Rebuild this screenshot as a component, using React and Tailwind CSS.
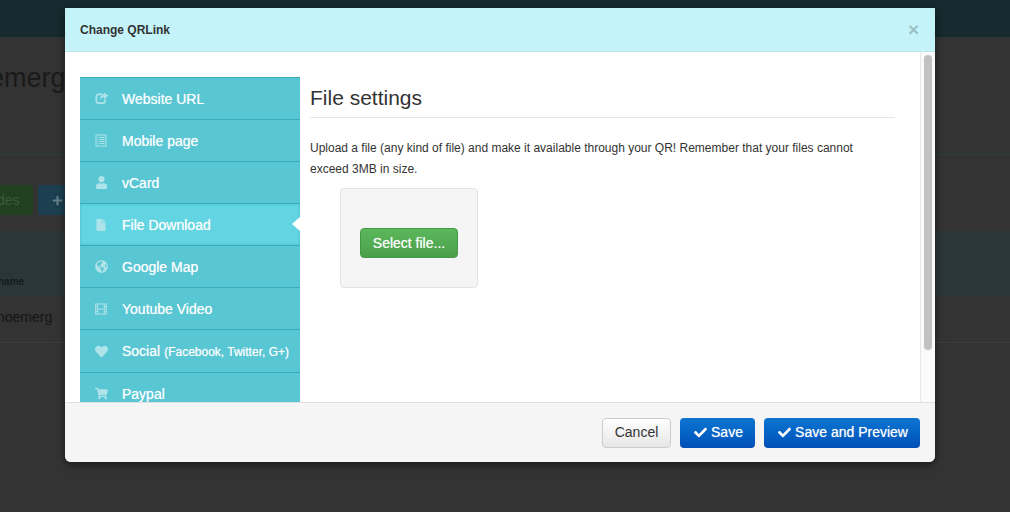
import { FaCheck, FaFile, FaGlobeAmericas, FaHeart, FaPlus, FaShoppingCart, FaUser } from "react-icons/fa";

const ShareIcon = () => (
  <svg width="14" height="13" viewBox="0 0 14 13" fill="currentColor">
    <path d="M3.500 1.500H8V3.200H3.500C2.700 3.200 2.200 3.700 2.200 4.500V9C2.200 9.800 2.700 10.300 3.500 10.300H8C8.800 10.300 9.300 9.800 9.300 9V8L11 6.800V9C11 10.700 9.700 12 8 12H3.500C1.800 12 0.500 10.700 0.500 9V4.500C0.500 2.800 1.800 1.500 3.500 1.500Z" />
    <path d="M9 0.500L13.500 3.800L9 7.200V5.200C7 5.200 5.500 6 4.800 8C4.800 5 6.500 2.800 9 2.500Z" />
  </svg>
);

const ListIcon = () => (
  <svg width="12" height="13" viewBox="0 0 12 13" fill="currentColor">
    <path fillRule="evenodd" d="M0.500 0.500H11.500V12.500H0.500ZM1.500 1.500V11.500H10.500V1.500Z" />
    <path d="M2.500 3H3.500V4H2.500ZM4.500 3H9.500V4H4.500ZM2.500 5H3.500V6H2.500ZM4.500 5H9.500V6H4.500ZM2.500 7H3.500V8H2.500ZM4.500 7H9.500V8H4.500ZM2.500 9H3.500V10H2.500ZM4.500 9H9.500V10H4.500Z" />
  </svg>
);

const FilmIcon = () => (
  <svg width="12" height="12" viewBox="0 0 12 12" fill="currentColor">
    <path fillRule="evenodd" d="M0 0.500H12V11.500H0ZM0.800 1.500V3H2.200V1.500ZM0.800 4V5.500H2.200V4ZM0.800 6.500V8H2.200V6.500ZM0.800 9V10.500H2.200V9ZM9.800 1.500V3H11.200V1.500ZM9.800 4V5.500H11.200V4ZM9.800 6.500V8H11.200V6.500ZM9.800 9V10.500H11.200V9ZM3.200 1.500V5.500H8.800V1.500ZM3.200 6.500V10.500H8.800V6.500Z" />
  </svg>
);

const menu = [
  { label: "Website URL", icon: <ShareIcon /> },
  { label: "Mobile page", icon: <ListIcon /> },
  { label: "vCard", icon: <FaUser size={13} /> },
  { label: "File Download", icon: <FaFile size={12} />, active: true },
  { label: "Google Map", icon: <FaGlobeAmericas size={13} /> },
  { label: "Youtube Video", icon: <FilmIcon /> },
  { label: "Social", small: "(Facebook, Twitter, G+)", icon: <FaHeart size={13} />, tall: true },
  { label: "Paypal", icon: <FaShoppingCart size={13} /> },
];

const MenuItem = ({ item }) => (
  <div
    className={`relative flex shrink-0 items-center border-b border-[#38aebd] pl-[15px] text-white ${
      item.tall ? "h-[43px]" : "h-[42px]"
    } ${item.active ? "bg-[#63d5e2] shadow-[inset_0_0_3px_#45b8c6]" : "bg-[#58c6d3]"}`}
  >
    <span className="flex w-[27px] shrink-0 justify-start text-[#aee3e9]">{item.icon}</span>
    <span className="text-[14px] leading-none whitespace-nowrap [text-shadow:0_0_1px_rgba(255,255,255,0.6)]">
      {item.label}
      {item.small && <span className="ml-1 text-[12px]">{item.small}</span>}
    </span>
    {item.active && (
      <span className="absolute right-0 top-[13px] h-0 w-0 border-y-[7px] border-r-[8px] border-y-transparent border-r-white" />
    )}
  </div>
);

const Background = () => (
  <div className="flex h-[512px] w-[1010px] flex-col overflow-hidden bg-[#333333]">
    <div className="h-[37px] shrink-0 bg-[#172a2f]" />
    <div className="flex h-[81px] shrink-0 items-start border-b border-[#2e3a3a] pt-[23px]">
      <span className="ml-[-11px] text-[27px] leading-[36px] text-[#1a1a1a]">emerg</span>
    </div>
    <div className="h-[37px] shrink-0 border-b border-[#2a3e44]" />
    <div className="flex h-[76px] shrink-0 items-start gap-[5px] pt-[30px]">
      <div className="flex h-[30px] w-[33px] items-center overflow-hidden rounded-r-[4px] bg-[#21401f] text-[14px] text-[#3d5a3a]">
        <span className="ml-[-3px]">des</span>
      </div>
      <div className="flex h-[30px] w-[40px] items-center rounded-l-[4px] bg-[#1c4050] pl-[14px] text-[#64808a]">
        <FaPlus size={11} />
      </div>
    </div>
    <div className="flex h-[65px] shrink-0 items-end bg-[#2b3639] pb-[7px] pl-0 text-[10px] font-bold text-[#151c1e]">
      <span className="ml-[-2px]">name</span>
    </div>
    <div className="flex h-[47px] shrink-0 items-center border-b border-[#3d3d3d] pb-[3px] text-[14px] text-[#151515]">
      <span className="ml-[-3px]">noemerg</span>
    </div>
  </div>
);

export default function App() {
  return (
    <div className="relative h-[512px] w-[1010px] overflow-hidden font-['Liberation_Sans',Arial,sans-serif] text-[#333333]">
      <Background />

      <div className="absolute left-[65px] top-[8px] flex h-[454px] w-[870px] flex-col overflow-hidden rounded-b-[6px] bg-white shadow-[0_3px_9px_rgba(0,0,0,0.5)]">
        <div className="flex h-[44px] shrink-0 items-center justify-between border-b border-[#b9e8ee] bg-[#c4f4f9] pl-[15px] pr-[16px]">
          <h3 className="pt-[1px] text-[12px] font-bold text-[#333333]">Change QRLink</h3>
          <span className="text-[19px] font-bold leading-none text-[#9cbfc4]">×</span>
        </div>

        <div className="flex min-h-0 flex-1">
          <div className="flex min-w-0 flex-1 overflow-hidden pl-[15px] pt-[25px]">
            <div className="flex h-[400px] w-[220px] shrink-0 flex-col border-t border-[#38aebd]">
              {menu.map((item) => (
                <MenuItem key={item.label} item={item} />
              ))}
            </div>
            <div className="w-[595px] shrink-0 pl-[10px]">
              <h2 className="border-b border-[#e5e5e5] pb-[6px] pt-[8px] text-[21px] leading-[26px] text-[#333333]">
                File settings
              </h2>
              <p className="mt-[20px] w-[560px] text-[12px] leading-[20.5px] text-[#333333]">
                Upload a file (any kind of file) and make it available through your QR! Remember that your files cannot
                exceed 3MB in size.
              </p>
              <div className="ml-[30px] mt-[9px] flex h-[100px] w-[138px] items-start justify-center rounded-[4px] border border-[#e3e3e3] bg-[#f5f5f5] pt-[39px]">
                <button className="h-[30px] w-[98px] rounded-[4px] border border-[#429a42] bg-gradient-to-b from-[#5cb85c] to-[#4a9f4a] text-[14px] text-white [text-shadow:0_0_1px_rgba(255,255,255,0.6)]">
                  Select file...
                </button>
              </div>
            </div>
          </div>
          <div className="flex w-[15px] shrink-0 justify-center border-l border-[#e8e8e8] bg-[#fafafa] pt-[3px]">
            <div className="h-[295px] w-[8px] rounded-full bg-[#c1c1c1]" />
          </div>
        </div>

        <div className="flex h-[60px] shrink-0 items-center justify-end gap-[9px] border-t border-[#e0e0e0] bg-[#f5f5f5] pr-[15px]">
          <button className="h-[30px] w-[69px] rounded-[4px] border border-[#cccccc] bg-gradient-to-b from-white to-[#e6e6e6] text-[14px] text-[#333333]">
            Cancel
          </button>
          <button className="flex h-[30px] w-[75px] items-center justify-center gap-[4px] rounded-[4px] bg-gradient-to-b from-[#0e75d1] to-[#0250b8] pl-[2px] text-[14px] text-white [text-shadow:0_0_1px_rgba(255,255,255,0.6)]">
            <FaCheck size={13} /> Save
          </button>
          <button className="flex h-[30px] w-[156px] items-center justify-center gap-[4px] rounded-[4px] bg-gradient-to-b from-[#0e75d1] to-[#0250b8] pl-[2px] text-[14px] text-white [text-shadow:0_0_1px_rgba(255,255,255,0.6)]">
            <FaCheck size={13} /> Save and Preview
          </button>
        </div>
      </div>
    </div>
  );
}
